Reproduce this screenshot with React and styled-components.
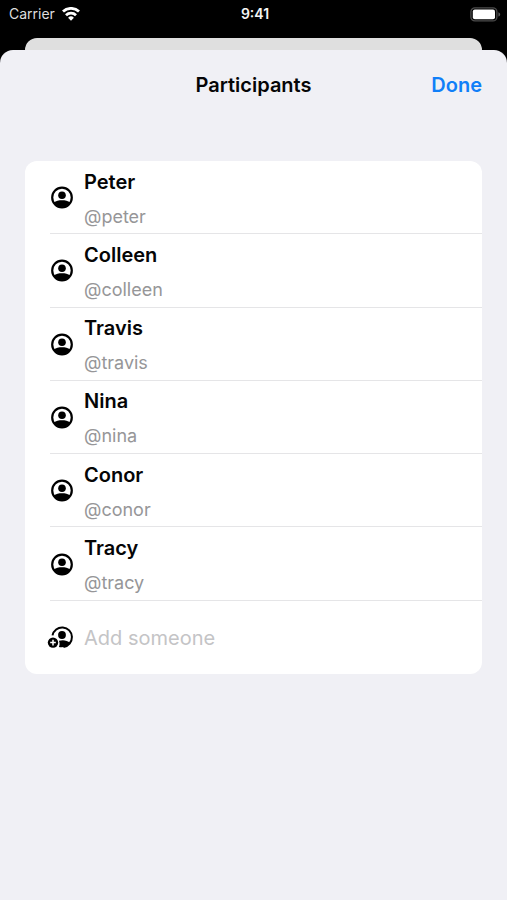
import React from "react";
import styled, { createGlobalStyle } from "styled-components";

const GlobalStyle = createGlobalStyle`
  *, *::before, *::after { box-sizing: border-box; }
  html { background: #000; }
  body {
    margin: 0;
    font-family: Inter, "Liberation Sans", sans-serif;
    color: #050506;
  }
`;

const Screen = styled.div`
  display: flex;
  flex-direction: column;
  min-height: 100vh;
  background: #000;
`;

const StatusBar = styled.header`
  display: grid;
  grid-template-columns: 1fr auto 1fr;
  align-items: center;
  height: 28px;
  padding: 0 6px 0 9px;
  color: #dedede;
  font-size: 14px;
  line-height: 16px;
`;

const Carrier = styled.span`
  display: flex;
  align-items: center;
  gap: 7px;
`;

const Clock = styled.time`
  color: #f4f4f4;
  font-weight: 600;
`;

const Battery = styled.svg`
  justify-self: end;
`;

const SheetBehind = styled.div`
  height: 12px;
  margin: 10px 25px 0;
  border-radius: 12px 12px 0 0;
  background: #dfdfdf;
`;

const Sheet = styled.main`
  flex: 1;
  padding: 0 25px 25px;
  border-radius: 13px 13px 0 0;
  background: #f0f0f5;
`;

const NavBar = styled.div`
  display: grid;
  grid-template-columns: 1fr auto 1fr;
  align-items: center;
  height: 69px;
`;

const Title = styled.h1`
  grid-column: 2;
  margin: 0;
  font-size: 20px;
  font-weight: 600;
  line-height: 28px;
`;

const DoneButton = styled.button`
  justify-self: end;
  padding: 0;
  border: 0;
  background: none;
  color: #107ff8;
  font: inherit;
  font-size: 20px;
  font-weight: 600;
  line-height: 28px;
  cursor: pointer;
`;

const Card = styled.ul`
  display: grid;
  grid-auto-rows: 1fr;
  min-height: 513px;
  margin: 42px 0 0;
  padding: 0 0 0 25px;
  border-radius: 12px;
  background: #fff;
  list-style: none;
`;

const Row = styled.li`
  display: grid;
  grid-template-columns: 24px 1fr;
  align-items: center;
  column-gap: 10px;
  border-bottom: 1px solid #e5e5e7;

  &:last-child {
    border-bottom: 0;
  }
`;

const Icon = styled.svg`
  display: block;
  overflow: visible;
`;

const Person = styled.div`
  display: flex;
  flex-direction: column;
  gap: 9px;
  padding-top: 4px;
`;

const Name = styled.span`
  font-size: 20px;
  font-weight: 600;
  line-height: 26px;
`;

const Handle = styled.span`
  color: #969698;
  font-size: 18px;
  line-height: 26px;
`;

const AddField = styled.input`
  width: 100%;
  padding: 2px 0 0;
  border: 0;
  outline: 0;
  background: none;
  color: inherit;
  font: inherit;
  font-size: 20px;
  line-height: 28px;

  &::placeholder {
    color: #c4c4c6;
    opacity: 1;
  }
`;

const people = [
  { name: "Peter", handle: "@peter" },
  { name: "Colleen", handle: "@colleen" },
  { name: "Travis", handle: "@travis" },
  { name: "Nina", handle: "@nina" },
  { name: "Conor", handle: "@conor" },
  { name: "Tracy", handle: "@tracy" },
];

function WifiIcon() {
  return (
    <svg width="18" height="14" viewBox="0 0 18 14" fill="none" stroke="#fff" strokeWidth="2.8" aria-hidden="true">
      <path d="M1 4.6a11.5 11.5 0 0 1 16 0" />
      <path d="M4 8.2a7.2 7.2 0 0 1 10 0" />
      <path d="M9 13.7 6.1 10.8a4.1 4.1 0 0 1 5.8 0z" fill="#fff" stroke="none" />
    </svg>
  );
}

function BatteryIcon() {
  return (
    <Battery width="31" height="15" viewBox="0 0 31 15" role="img" aria-label="Battery full">
      <rect x="0.9" y="0.9" width="26" height="13" rx="4" fill="none" stroke="#4c4c4c" strokeWidth="1.3" />
      <rect x="2.8" y="2.6" width="22.2" height="9.6" rx="2" fill="#fff" />
      <path d="M28.4 5.2c2.4.8 2.4 3.6 0 4.4z" fill="#5a5a5a" />
    </Battery>
  );
}

function PersonIcon() {
  return (
    <Icon width="24" height="24" viewBox="0 0 24 24" aria-hidden="true">
      <circle cx="12" cy="12.5" r="9.8" fill="none" stroke="#000" strokeWidth="2.2" />
      <circle cx="12" cy="10.2" r="3.8" />
      <path d="M3.8 17.6c2.2-1.8 5-2.4 8.2-2.4s6 .6 8.2 2.4a9.9 9.9 0 0 1-16.400 0z" />
    </Icon>
  );
}

function AddPersonIcon() {
  return (
    <Icon width="24" height="24" viewBox="0 0 24 24" aria-hidden="true">
      <path d="M2.5 10.4a9.8 9.8 0 1 1 11 11.5" fill="none" stroke="#000" strokeWidth="2" />
      <circle cx="12" cy="10" r="3.9" />
      <path d="M8.900 15.800c4-1.200 8.200-.6 11.100 2-2.200 3.800-6.600 5.200-11.100 4.300.9-1.900.9-4.400 0-6.300z" />
      <circle cx="3" cy="17.600" r="5.200" />
      <path d="M3 14.800v5.600M.2 17.600h5.600" stroke="#fff" strokeWidth="1.500" />
    </Icon>
  );
}

export default function App() {
  return (
    <>
      <GlobalStyle />
      <Screen>
        <StatusBar>
          <Carrier>
            Carrier
            <WifiIcon />
          </Carrier>
          <Clock>9:41</Clock>
          <BatteryIcon />
        </StatusBar>
        <SheetBehind />
        <Sheet>
          <NavBar>
            <Title>Participants</Title>
            <DoneButton type="button">Done</DoneButton>
          </NavBar>
          <Card>
            {people.map((person) => (
              <Row key={person.handle}>
                <PersonIcon />
                <Person>
                  <Name>{person.name}</Name>
                  <Handle>{person.handle}</Handle>
                </Person>
              </Row>
            ))}
            <Row>
              <AddPersonIcon />
              <AddField type="text" aria-label="Add someone" placeholder="Add someone" />
            </Row>
          </Card>
        </Sheet>
      </Screen>
    </>
  );
}
